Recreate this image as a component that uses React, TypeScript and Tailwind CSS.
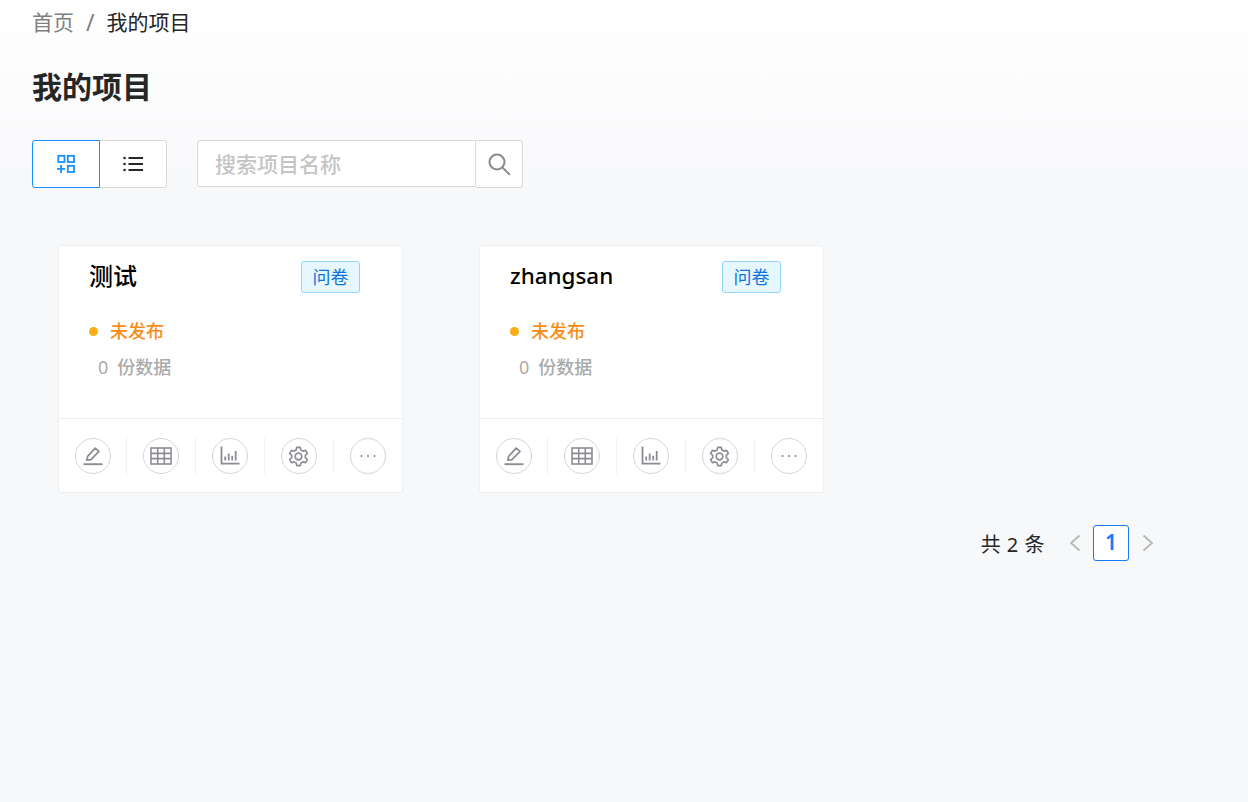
import React from "react";

const FONT = '"Noto Sans","Noto Sans CJK SC",sans-serif';

function IconCircle({ children }: { children: React.ReactNode }) {
  return (
    <div className="w-[36px] h-[36px] rounded-full border border-[#d6d6d8] flex items-center justify-center bg-white">
      {children}
    </div>
  );
}

const PenIcon = () => (
  <svg width="20" height="20" viewBox="0 0 20 20" fill="none" stroke="#8c8c94" strokeWidth="1.7">
    <path d="M3.8 14.2 L4.6 10.4 L12.2 2.2 L16 5.4 L8 13.6 Z" strokeLinejoin="round" />
    <path d="M0.5 18.2 H19.5" strokeWidth="1.9" />
  </svg>
);
const TableIcon = () => (
  <svg width="22" height="18" viewBox="0 0 22 18" fill="none" stroke="#8c8c94" strokeWidth="1.6">
    <rect x="1" y="1" width="20" height="16" />
    <path d="M1 6.4 H21 M1 11.6 H21 M7.7 1 V17 M14.3 1 V17" />
  </svg>
);
const ChartIcon = () => (
  <svg width="20" height="19" viewBox="0 0 20 19" fill="none" stroke="#8c8c94" strokeWidth="1.6">
    <path d="M1.5 0.5 V17.6 H19.5" strokeWidth="1.8" />
    <path d="M5.2 14.6 V10.5 M8.7 14.6 V7.5 M12.2 14.6 V9.8 M15.7 14.6 V5" strokeWidth="1.8" />
  </svg>
);
const GearIcon = () => (
  <svg className="mt-[2px]" width="21" height="21" viewBox="0 0 24 24" fill="none" stroke="#8c8c94" strokeWidth="1.9" strokeLinejoin="round">
    <path d="M10 1.5 H14 L14.7 4.6 C15.6 4.9 16.4 5.4 17.1 5.9 L20.1 5 L22.1 8.5 L19.8 10.6 C19.9 11.5 19.9 12.5 19.8 13.4 L22.1 15.5 L20.1 19 L17.1 18.1 C16.4 18.6 15.6 19.1 14.7 19.4 L14 22.5 H10 L9.3 19.4 C8.4 19.1 7.6 18.6 6.9 18.1 L3.9 19 L1.9 15.5 L4.2 13.4 C4.1 12.5 4.1 11.5 4.2 10.6 L1.9 8.5 L3.9 5 L6.9 5.9 C7.6 5.4 8.4 4.9 9.3 4.6 Z" />
    <circle cx="12" cy="12" r="3.8" />
  </svg>
);
const MoreIcon = () => (
  <svg width="18" height="4" viewBox="0 0 18 4" fill="#8c8c94">
    <circle cx="2.5" cy="2" r="1.1" />
    <circle cx="9" cy="2" r="1.1" />
    <circle cx="15.5" cy="2" r="1.1" />
  </svg>
);

function Card({ title, titleClass }: { title: string; titleClass: string }) {
  const icons = [<PenIcon />, <TableIcon />, <ChartIcon />, <GearIcon />, <MoreIcon />];
  return (
    <div className="w-[345px] h-[248px] bg-white border border-[#eeeff1] rounded-[3px] flex flex-col">
      <div className="h-[173px] pl-[30px] pr-[42px] border-b border-[#ebedf0]">
        <div className="flex items-start justify-between pt-[15px]">
          <span className={`${titleClass} leading-[30px] font-medium text-black`}>{title}</span>
          <span className="w-[59px] h-[32px] flex items-center justify-center rounded-[3px] border border-[#91d5ff] bg-[#e6f7ff] text-[#0f75dc] text-[18px]">
            问卷
          </span>
        </div>
        <div className="flex items-center mt-[25px] h-[26px]">
          <span className="w-[9px] h-[9px] rounded-full bg-[#faad14]" />
          <span className="ml-[12px] text-[18px] text-[#fa8c16] font-medium">未发布</span>
        </div>
        <div className="flex items-center mt-[10px] h-[26px] pl-[9px] text-[#aaaaaa] text-[18px] font-medium">
          <span className="font-normal">0</span>
          <span className="ml-[9px]">份数据</span>
        </div>
      </div>
      <div className="flex-1 flex items-center pl-[15.5px] pr-[16.3px] justify-between">
        {icons.map((ic, i) => (
          <React.Fragment key={i}>
            {i > 0 && <div className="w-px h-[36px] bg-[#f0f0f0]" />}
            <IconCircle>{ic}</IconCircle>
          </React.Fragment>
        ))}
      </div>
    </div>
  );
}

export default function App() {
  return (
    <div
      className="min-h-[802px] px-[32px] bg-gradient-to-b from-white to-[#f7f8fa] to-[200px] bg-[#f7f8fa]"
      style={{ fontFamily: FONT }}
    >
      <div className="h-[44px] flex items-center text-[21px] leading-[30px]">
        <span className="text-[#7f7f7f]">首页</span>
        <span className="text-[#7f7f7f] mx-[12px] text-[23px]">/</span>
        <span className="text-[#262626]">我的项目</span>
      </div>
      <h1 className="mt-[20px] h-[44px] flex items-center text-[30px] font-bold text-[#262626]">我的项目</h1>
      <div className="mt-[32px] flex items-center">
        <div className="flex h-[48px]">
          <button className="w-[68px] flex items-center justify-center border border-[#1890ff] rounded-l-[3px] bg-white">
            <svg width="20" height="20" viewBox="0 0 20 20" fill="none" stroke="#1890ff" strokeWidth="1.8">
              <rect x="2.3" y="1.8" width="6.2" height="6.2" />
              <rect x="11.8" y="1.8" width="6.2" height="6.2" />
              <rect x="11.8" y="11.8" width="6.2" height="6.2" />
              <path d="M1 14.9 H9 M5 11 V19" />
            </svg>
          </button>
          <button className="w-[67px] flex items-center justify-center border border-l-0 border-[#d9d9d9] rounded-r-[3px] bg-white">
            <svg width="20" height="16" viewBox="0 0 20 16" fill="none" stroke="#262626">
              <path d="M5.5 2 H20 M5.5 8 H20 M5.5 14 H20" strokeWidth="1.8" />
              <circle cx="1.5" cy="2" r="1.3" fill="#262626" stroke="none" />
              <circle cx="1.5" cy="8" r="1.3" fill="#262626" stroke="none" />
              <circle cx="1.5" cy="14" r="1.3" fill="#262626" stroke="none" />
            </svg>
          </button>
        </div>
        <div className="ml-[30px] flex h-[48px]">
          <input
            placeholder="搜索项目名称"
            className="w-[279px] h-[47px] pl-[17px] border border-[#d9d9d9] rounded-l-[3px] bg-white text-[21px] font-medium outline-none placeholder:text-[#c4c4c4]"
          />
          <button className="w-[47px] flex items-center justify-center border border-l-0 border-[#d9d9d9] rounded-r-[3px] bg-white">
            <svg width="24" height="24" viewBox="0 0 24 24" fill="none" stroke="#8a8a8a" strokeWidth="2">
              <circle cx="10" cy="10" r="7.5" />
              <path d="M15.6 15.6 L22.8 22.8" />
            </svg>
          </button>
        </div>
      </div>
      <div className="mt-[57px] ml-[26px] flex gap-[76px]">
        <Card title="测试" titleClass="text-[24px]" />
        <Card title="zhangsan" titleClass="text-[22.4px]" />
      </div>
      <div className="mt-[32px] flex items-center justify-end pr-[61px] h-[36px]">
        <span className="pt-[3px] text-[20px] tracking-[0.5px] text-[#262626]">共 2 条</span>
        <svg className="ml-[23px]" width="14" height="18" viewBox="0 0 14 18" fill="none" stroke="#b5b5b5" strokeWidth="1.7">
          <path d="M11.5 1.5 L3 9 L11.5 16.5" />
        </svg>
        <span className="ml-[11px] w-[36px] h-[36px] flex items-center justify-center bg-white border border-[#1677ff] rounded-[3px] text-[#1677ff] text-[21px] font-semibold">
          1
        </span>
        <svg className="ml-[12px]" width="14" height="18" viewBox="0 0 14 18" fill="none" stroke="#b5b5b5" strokeWidth="1.7">
          <path d="M2.5 1.5 L11 9 L2.5 16.5" />
        </svg>
      </div>
    </div>
  );
}
